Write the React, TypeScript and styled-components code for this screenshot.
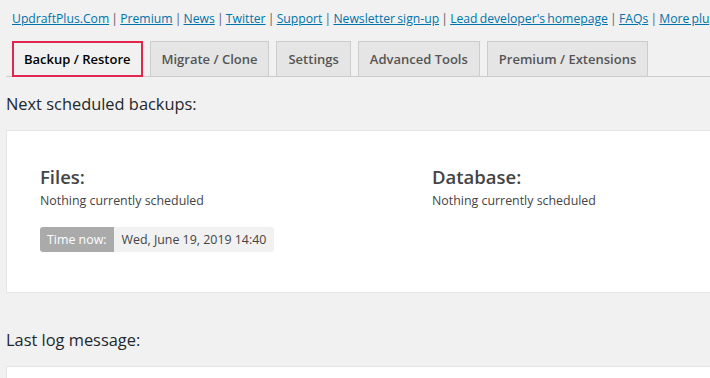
import React from "react";
import styled, { createGlobalStyle } from "styled-components";

const GlobalStyle = createGlobalStyle`
  html, body {
    margin: 0;
    padding: 0;
    background: #f1f1f1;
    overflow: hidden;
  }
  body {
    font-family: "Open Sans", "Noto Sans", sans-serif;
    font-size: 12.4px;
    color: #444;
  }
`;

const Page = styled.div`
  width: 710px;
  height: 378px;
  overflow: hidden;
  padding-left: 6px;
  box-sizing: border-box;
`;

const LinkBar = styled.div`
  padding: 10px 0 0 6px;
  height: 31px;
  box-sizing: border-box;
  white-space: nowrap;
  overflow: hidden;
  color: #555d66;
  font-size: 12.2px;
  word-spacing: -1px;
  line-height: 18px;
`;

const Link = styled.a`
  color: #0073aa;
  text-decoration: underline;
`;

const TabRow = styled.div`
  display: flex;
  gap: 7px;
  padding: 10px 0 0 6px;
  border-bottom: 1px solid #ccc;
  white-space: nowrap;
`;

const Tab = styled.div<{ active?: boolean }>`
  height: 36px;
  box-sizing: border-box;
  display: flex;
  align-items: center;
  padding: 0 ${(p) => (p.active ? "10px" : "11px")};
  margin-bottom: -1px;
  font-size: 13px;
  font-weight: 600;
  color: ${(p) => (p.active ? "#000" : "#555")};
  background: ${(p) => (p.active ? "#f1f1f1" : "#e5e5e5")};
  border: ${(p) => (p.active ? "2px solid #e2264d" : "1px solid #ccc")};
`;

const SectionTitle = styled.h2`
  margin: 0;
  font-size: 16.4px;
  font-weight: 500;
  color: #23282d;
  line-height: 24px;
`;

const Panel = styled.div`
  background: #fff;
  border: 1px solid #e5e5e5;
  border-right: none;
  box-sizing: border-box;
`;

const SchedulePanel = styled(Panel)`
  height: 163px;
  margin-top: 14px;
  display: grid;
  grid-template-columns: 392px 1fr;
  padding: 33px 0 0 33px;
`;

const Column = styled.div`
  display: flex;
  flex-direction: column;
`;

const ColumnTitle = styled.h3`
  margin: 0;
  font-size: 18.5px;
  font-weight: 600;
  line-height: 26px;
  color: #444;
`;

const Status = styled.div`
  margin-top: 2px;
  font-size: 12.4px;
  line-height: 18px;
  color: #444;
`;

const TimePill = styled.div`
  display: inline-flex;
  align-self: flex-start;
  margin-top: 17px;
  height: 25px;
  border-radius: 3px;
  overflow: hidden;
  font-size: 12.4px;
  line-height: 25px;
`;

const TimeLabel = styled.span`
  background: #aaa;
  color: #fff;
  padding: 0 7px;
`;

const TimeValue = styled.span`
  background: #f1f1f1;
  color: #444;
  padding: 0 8px;
`;

const Heading = styled.div<{ top: number }>`
  margin-top: ${(p) => p.top}px;
`;

const LogPanel = styled(Panel)`
  height: 40px;
  margin-top: 14px;
`;

const links = [
  "UpdraftPlus.Com",
  "Premium",
  "News",
  "Twitter",
  "Support",
  "Newsletter sign-up",
  "Lead developer's homepage",
  "FAQs",
  "More plugins",
];

const tabs = [
  "Backup / Restore",
  "Migrate / Clone",
  "Settings",
  "Advanced Tools",
  "Premium / Extensions",
];

const App: React.FC = () => {
  return (
    <Page>
      <GlobalStyle />
      <LinkBar>
        {links.map((l, i) => (
          <React.Fragment key={l}>
            {i > 0 && " | "}
            <Link href="#">{l}</Link>
          </React.Fragment>
        ))}
      </LinkBar>
      <TabRow>
        {tabs.map((t, i) => (
          <Tab key={t} active={i === 0}>
            {t}
          </Tab>
        ))}
      </TabRow>
      <Heading top={15}>
        <SectionTitle>Next scheduled backups:</SectionTitle>
      </Heading>
      <SchedulePanel>
        <Column>
          <ColumnTitle>Files:</ColumnTitle>
          <Status>Nothing currently scheduled</Status>
          <TimePill>
            <TimeLabel>Time now:</TimeLabel>
            <TimeValue>Wed, June 19, 2019 14:40</TimeValue>
          </TimePill>
        </Column>
        <Column>
          <ColumnTitle>Database:</ColumnTitle>
          <Status>Nothing currently scheduled</Status>
        </Column>
      </SchedulePanel>
      <Heading top={35}>
        <SectionTitle>Last log message:</SectionTitle>
      </Heading>
      <LogPanel />
    </Page>
  );
};

export default App;
